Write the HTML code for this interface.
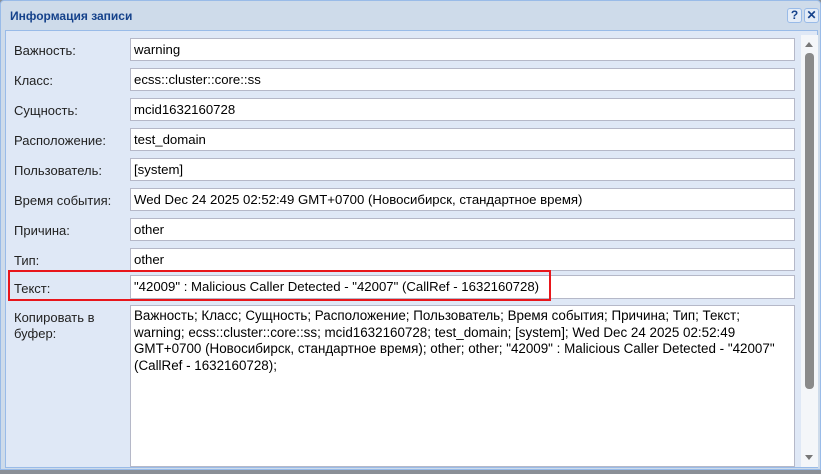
<!DOCTYPE html><html><head><style>
*{margin:0;padding:0;box-sizing:border-box}
body{width:821px;height:474px;background:#8a8f96;font-family:"Liberation Sans",Arial,sans-serif;font-size:13px;color:#000;position:relative;overflow:hidden}
.win{position:absolute;left:0;top:0;width:821px;height:470px;background:#cedbea;border:1px solid #99bbe8;border-radius:4px 4px 0 0}
.title{position:absolute;left:9px;top:8px;font-weight:bold;font-size:12px;color:#15428b}
.btn{position:absolute;top:7px;width:15px;height:15px;border:1px solid #99bbe8;border-radius:3px;background:#e4ecf7;color:#15428b;font-size:12px;font-weight:bold;text-align:center;line-height:13px}
.body{position:absolute;left:4px;top:29px;width:813px;height:438px;background:#dfe8f6;border:1px solid #99bbe8}
.lbl{position:absolute;left:14px;color:#222}
.inp{position:absolute;left:130px;width:665px;height:23px;background:#fff;border:1px solid #b5b8c8;padding:3px 3px;white-space:nowrap;font-size:13.2px}
.ta{position:absolute;left:130px;top:305px;width:665px;height:162px;background:#fff;border:1px solid #b5b8c8;padding:2px 3px;line-height:16.5px;font-size:13.4px;white-space:nowrap}
.red{position:absolute;left:8px;top:270px;width:543px;height:31px;border:2px solid #e8161b}
.sb{position:absolute;left:801px;top:35px;width:17px;height:432px;background:#f4f6f9}
.th{position:absolute;left:805px;top:53px;width:9px;height:336px;background:#8a8a8a;border-radius:4px}
</style></head><body>
<div class="win">
<div class="title">Информация записи</div>
<div class="btn" style="left:786px">?</div>
<div class="btn" style="left:803px">✕</div>
<div class="body"></div>
</div>
<div class="lbl" style="top:43px">Важность:</div><div class="inp" style="top:38px">warning</div>
<div class="lbl" style="top:73px">Класс:</div><div class="inp" style="top:68px">ecss::cluster::core::ss</div>
<div class="lbl" style="top:103px">Сущность:</div><div class="inp" style="top:98px">mcid1632160728</div>
<div class="lbl" style="top:133px">Расположение:</div><div class="inp" style="top:128px">test_domain</div>
<div class="lbl" style="top:163px">Пользователь:</div><div class="inp" style="top:158px">[system]</div>
<div class="lbl" style="top:193px">Время события:</div><div class="inp" style="top:188px">Wed Dec 24 2025 02:52:49 GMT+0700 (Новосибирск, стандартное время)</div>
<div class="lbl" style="top:223px">Причина:</div><div class="inp" style="top:218px">other</div>
<div class="lbl" style="top:253px">Тип:</div><div class="inp" style="top:248px">other</div>
<div class="lbl" style="top:281px">Текст:</div><div class="inp" style="top:275px;height:24px;padding-top:3px">"42009" : Malicious Caller Detected - "42007" (CallRef - 1632160728)</div>
<div class="red"></div>
<div class="lbl" style="top:310px;line-height:16px">Копировать в<br>буфер:</div>
<div class="ta">Важность; Класс; Сущность; Расположение; Пользователь; Время события; Причина; Тип; Текст;<br>warning; ecss::cluster::core::ss; mcid1632160728; test_domain; [system]; Wed Dec 24 2025 02:52:49<br>GMT+0700 (Новосибирск, стандартное время); other; other; "42009" : Malicious Caller Detected - "42007"<br>(CallRef - 1632160728);</div>
<div class="sb"></div>
<div style="position:absolute;left:805px;top:42px;border:4px solid transparent;border-bottom:5px solid #777;border-top:0"></div>
<div class="th"></div>
<div style="position:absolute;left:805px;top:455px;border:4px solid transparent;border-top:5px solid #777;border-bottom:0"></div>
</body></html>
